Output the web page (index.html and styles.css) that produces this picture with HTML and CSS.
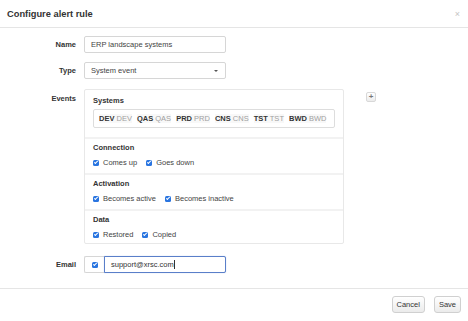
FILE: index.html
```html
<!DOCTYPE html>
<html>
<head>
    <title>Configure alert rule</title>
    <meta charset="UTF-8">
    <link rel="stylesheet" href="styles.css">
</head>
<body>
    <div class="dialog">
        <header class="dialog-header">
            <h1>Configure alert rule</h1>
            <span class="close">×</span>
        </header>

        <div class="dialog-body">
            <div class="field">
                <label>Name</label>
                <input class="text-input" type="text" value="ERP landscape systems">
            </div>

            <div class="field">
                <label>Type</label>
                <div class="select">System event<span class="caret"></span></div>
            </div>

            <div class="field events">
                <label>Events</label>
                <div class="panel">
                    <div class="section systems">
                        <div class="section-title">Systems</div>
                        <div class="system-box">
                            <span class="chip"><b>DEV</b> DEV</span>
                            <span class="chip"><b>QAS</b> QAS</span>
                            <span class="chip"><b>PRD</b> PRD</span>
                            <span class="chip"><b>CNS</b> CNS</span>
                            <span class="chip"><b>TST</b> TST</span>
                            <span class="chip"><b>BWD</b> BWD</span>
                        </div>
                    </div>
                    <div class="section">
                        <div class="section-title">Connection</div>
                        <div class="checks">
                            <span class="check-item"><span class="check"></span>Comes up</span>
                            <span class="check-item"><span class="check"></span>Goes down</span>
                        </div>
                    </div>
                    <div class="section">
                        <div class="section-title">Activation</div>
                        <div class="checks">
                            <span class="check-item"><span class="check"></span>Becomes active</span>
                            <span class="check-item"><span class="check"></span>Becomes inactive</span>
                        </div>
                    </div>
                    <div class="section">
                        <div class="section-title">Data</div>
                        <div class="checks">
                            <span class="check-item"><span class="check"></span>Restored</span>
                            <span class="check-item"><span class="check"></span>Copied</span>
                        </div>
                    </div>
                </div>
                <button class="add-btn">+</button>
            </div>

            <div class="field">
                <label>Email</label>
                <div class="input-group">
                    <span class="addon"><span class="check"></span></span>
                    <div class="text-input focused">support@xrsc.com<span class="cursor"></span></div>
                </div>
            </div>
        </div>

        <footer class="dialog-footer">
            <button class="btn">Cancel</button>
            <button class="btn">Save</button>
        </footer>
    </div>
</body>
</html>
```

FILE: styles.css
```css
body, html {
    margin: 0;
    padding: 0;
    background: #fff;
    font-family: "Liberation Sans", Arial, sans-serif;
    font-size: 7.5px;
    color: #333;
}

.dialog {
    width: 468px;
    height: 321px;
    display: flex;
    flex-direction: column;
}

.dialog-header {
    height: 27px;
    border-bottom: 1px solid #e5e5e5;
    padding: 0 8px 0 7px;
    display: flex;
    align-items: center;
    justify-content: space-between;
}

.dialog-header h1 {
    margin: 0;
    font-size: 9.3px;
    font-weight: bold;
    color: #333;
}

.close {
    color: #c4c4c4;
    font-size: 9px;
}

.dialog-body {
    flex: 1;
    padding-top: 8px;
}

.field {
    display: grid;
    grid-template-columns: 76px 142px;
    column-gap: 8px;
    align-items: center;
    margin-bottom: 9px;
}

.field > label {
    text-align: right;
    font-weight: bold;
    color: #333;
}

.text-input, .select {
    box-sizing: border-box;
    height: 17px;
    margin: 0;
    border: 1px solid #d6d6d6;
    border-radius: 2px;
    padding: 0 6px;
    font: inherit;
    color: #444;
    background: #fff;
    outline: none;
    display: flex;
    align-items: center;
}

.select {
    justify-content: space-between;
}

.caret {
    width: 0;
    height: 0;
    border-left: 2px solid transparent;
    border-right: 2px solid transparent;
    border-top: 2px solid #555;
    margin-right: 1px;
}

.events {
    grid-template-columns: 76px 260px 20px;
    align-items: start;
    margin-top: 10px;
    margin-bottom: 12px;
}

.events > label {
    padding-top: 5px;
}

.panel {
    border: 1px solid #e8e8e8;
    border-radius: 2px;
    box-sizing: border-box;
    height: 155px;
}

.section {
    box-sizing: border-box;
    border-top: 2px solid #f2f2f2;
    padding: 4px 8px 0;
    height: 36px;
}

.section.systems {
    border-top: none;
    height: 47px;
    padding-top: 6px;
}

.section-title {
    font-weight: bold;
    color: #333;
    line-height: 9px;
}

.system-box {
    box-sizing: border-box;
    margin-top: 4px;
    height: 19px;
    border: 1px solid #ddd;
    border-radius: 2px;
    padding: 0 5px;
    display: flex;
    align-items: center;
    gap: 5px;
}

.chip {
    color: #a0a0a0;
    background: #f8f8f8;
    white-space: nowrap;
}

.chip b {
    color: #333;
}

.checks {
    display: flex;
    gap: 9px;
    margin-top: 6px;
    line-height: 9px;
}

.check-item {
    display: flex;
    align-items: center;
    gap: 4px;
    color: #444;
}

.check {
    position: relative;
    display: inline-block;
    width: 6px;
    height: 6px;
    background: #2a75e0;
    border-radius: 1.5px;
}

.check::after {
    content: "";
    position: absolute;
    left: 2px;
    top: 0.5px;
    width: 1.3px;
    height: 3px;
    border: solid #fff;
    border-width: 0 1px 1px 0;
    transform: rotate(45deg);
}

.add-btn {
    margin: 3px 0 0 14px;
    width: 10px;
    height: 10px;
    padding: 0;
    border: 1px solid #d8d8d8;
    border-radius: 2px;
    background: linear-gradient(#fff, #ececec);
    color: #777;
    font: bold 8px/8px "Liberation Sans", Arial, sans-serif;
}

.input-group {
    display: flex;
    height: 17px;
}

.addon {
    box-sizing: border-box;
    width: 20px;
    border: 1px solid #d6d6d6;
    border-right: none;
    border-radius: 2px 0 0 2px;
    display: flex;
    align-items: center;
    justify-content: center;
}

.input-group .text-input {
    flex: 1;
    border-radius: 0 2px 2px 0;
}

.text-input.focused {
    border: 1px solid #5a7fc9;
    box-shadow: 0 0 1px #9bb3e3;
    color: #333;
}

.cursor {
    display: inline-block;
    width: 1px;
    height: 9px;
    background: #333;
}

.dialog-footer {
    border-top: 1px solid #e5e5e5;
    padding: 7px 7px 8px;
    display: flex;
    justify-content: flex-end;
    gap: 9px;
}

.btn {
    height: 17px;
    padding: 0 4px;
    border: 1px solid #d0d0d0;
    border-radius: 3px;
    background: linear-gradient(#fff, #ebebeb);
    font: 7.5px "Liberation Sans", Arial, sans-serif;
    color: #333;
}
```
